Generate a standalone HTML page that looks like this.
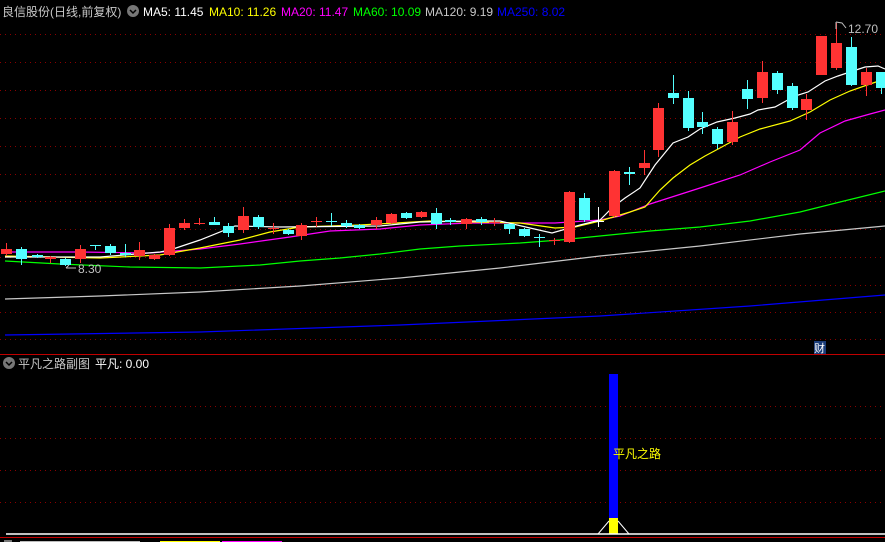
<!DOCTYPE html>
<html><head><meta charset="utf-8"><style>
html,body{margin:0;padding:0;background:#000;width:885px;height:542px;overflow:hidden}
svg{display:block}
text{font-family:"Liberation Sans","Noto Sans CJK SC",sans-serif}
</style></head><body>
<svg width="885" height="542" viewBox="0 0 885 542" xmlns="http://www.w3.org/2000/svg">
<rect width="885" height="542" fill="#000"/>
<g stroke="#8a0000" stroke-width="1" stroke-dasharray="1,4">
<line x1="0" y1="34.5" x2="885" y2="34.5"/><line x1="0" y1="62.5" x2="885" y2="62.5"/>
<line x1="0" y1="90.5" x2="885" y2="90.5"/><line x1="0" y1="118.5" x2="885" y2="118.5"/>
<line x1="0" y1="146.5" x2="885" y2="146.5"/><line x1="0" y1="174.5" x2="885" y2="174.5"/>
<line x1="0" y1="201.5" x2="885" y2="201.5"/><line x1="0" y1="229.5" x2="885" y2="229.5"/>
<line x1="0" y1="257.5" x2="885" y2="257.5"/><line x1="0" y1="285.5" x2="885" y2="285.5"/>
<line x1="0" y1="312.5" x2="885" y2="312.5"/><line x1="0" y1="339.5" x2="885" y2="339.5"/>
<line x1="0" y1="406.5" x2="885" y2="406.5"/><line x1="0" y1="438.5" x2="885" y2="438.5"/>
<line x1="0" y1="470.5" x2="885" y2="470.5"/><line x1="0" y1="502.5" x2="885" y2="502.5"/>
</g>
<line x1="0" y1="354.5" x2="885" y2="354.5" stroke="#c00000"/>
<line x1="0" y1="537.5" x2="885" y2="537.5" stroke="#c00000"/>
<g fill="none" stroke-width="1.2">
<polyline stroke="#0000ff" points="5,335 200,332 400,325 600,316 750,306 885,295"/>
<polyline stroke="#c8c8c8" points="5,299 100,296 200,292 300,286 400,278 500,268 600,256 700,246 800,234 885,226"/>
<polyline stroke="#00ff00" points="5,261 60,264 130,267 200,268 260,265 300,261 340,258 380,254 420,249 460,246 520,243 560,240 600,236 650,231 700,227 750,221 800,212 840,202 885,191"/>
<polyline stroke="#ff00ff" points="5,252 80,252 150,253 200,249 240,244 290,237 330,231 380,229 420,225 470,223 520,223 555,223 600,220 620,216 650,204 700,188 740,175 770,162 800,150 820,133 845,121 870,114 885,110"/>
<polyline stroke="#ffff00" points="5,256 100,258 160,255 200,248 240,240 270,232 300,227 360,225 430,221 520,223 555,228 575,227 600,221 630,212 645,207 660,190 673,178 690,165 705,156 720,148 740,137 760,129 790,121 810,112 830,100 850,91 870,84 885,79"/>
<polyline stroke="#ffffff" points="5,257 100,257 160,252 170,250 200,240 235,226 280,227 380,226 420,222 470,221 500,221 530,228 552,233 580,225 600,220 613,207 625,198 640,188 655,165 673,143 688,137 700,129 717,122 735,118 750,114 758,110 775,107 795,96 808,92 825,81 838,76 850,72 865,67 878,66 885,69"/>
</g>
<g id="c"></g>
<text x="848" y="33" font-size="12" fill="#c0c0c0">12.70</text>
<path d="M836 22 L836 29 M836 22 L842 23 L846 28" stroke="#c0c0c0" fill="none"/>
<text x="78" y="273" font-size="12" fill="#c0c0c0">8.30</text>
<path d="M66 268 L76 268 M66 268 L69 265" stroke="#c0c0c0" fill="none"/>
<rect x="814" y="341" width="12" height="13" fill="#1a3c78"/>
<text x="814" y="352" font-size="11" fill="#fff">财</text>
<text x="2" y="16" font-size="12" fill="#c8c8c8">良信股份(日线,前复权)</text>
<circle cx="133" cy="11" r="6" fill="#777"/><path d="M130 10 L133 13 L136 10" stroke="#000" stroke-width="1.5" fill="none"/>
<text x="143" y="16" font-size="12" fill="#fff">MA5: 11.45</text>
<text x="209" y="16" font-size="12" fill="#ffff00">MA10: 11.26</text>
<text x="281" y="16" font-size="12" fill="#ff00ff">MA20: 11.47</text>
<text x="353" y="16" font-size="12" fill="#00ff00">MA60: 10.09</text>
<text x="425" y="16" font-size="12" fill="#c8c8c8">MA120: 9.19</text>
<text x="497" y="16" font-size="12" fill="#0000ff">MA250: 8.02</text>
<circle cx="9" cy="363" r="6" fill="#777"/><path d="M6 362 L9 365 L12 362" stroke="#000" stroke-width="1.5" fill="none"/>
<text x="18" y="368" font-size="12" fill="#c8c8c8">平凡之路副图</text>
<text x="95" y="368" font-size="12" fill="#fff">平凡: 0.00</text>
<rect x="609" y="374" width="9" height="144" fill="#0000ff"/>
<rect x="609" y="518" width="9" height="16" fill="#ffff00"/>
<line x1="6" y1="534" x2="885" y2="534" stroke="#fff" stroke-width="1.5"/>
<path d="M598 534 L609 521 M618 521 L629 534" stroke="#fff" fill="none"/>
<text x="613" y="458" font-size="12" fill="#ffff00">平凡之路</text>
<g>
<rect x="4" y="540" width="8" height="2" fill="#777"/>
<rect x="20" y="541" width="120" height="1" fill="#bbb"/>
<rect x="160" y="541" width="60" height="1" fill="#ffff00"/>
<rect x="222" y="541" width="60" height="1" fill="#ff00ff"/>
</g>
</svg>
<script>
var d=[[6,'r',249,254,243,256],[21,'c',249,259,247,265],[37,'c',255,257,254,258],[50,'r',257,259,256,263],[65,'c',259,265,258,266],[80,'r',249,259,245,263],[95,'c',245,246,245,250],[110,'c',246,253,244,255],[125,'c',253,255,244,257],[139,'r',250,256,242,260],[154,'r',255,259,254,260],[169,'r',228,255,224,256],[184,'r',223,228,219,230],[199,'r',223,224,218,225],[214,'c',222,225,217,225],[228,'c',226,233,223,237],[243,'r',216,230,207,233],[258,'c',217,227,215,229],[273,'r',228,229,223,234],[288,'c',230,234,229,235],[301,'r',225,236,223,240],[316,'r',221,222,217,227],[331,'c',221,222,213,226],[346,'c',223,226,220,228],[359,'c',225,228,224,229],[376,'r',220,225,217,229],[391,'r',214,223,213,224],[406,'c',213,218,212,219],[421,'r',212,217,211,218],[436,'c',213,224,208,229],[450,'c',220,222,218,225],[466,'r',219,224,218,229],[481,'c',219,222,217,225],[494,'r',222,223,218,226],[509,'c',224,229,224,234],[524,'c',229,236,228,237],[539,'c',237,238,234,247],[554,'r',240,241,238,245],[569,'r',192,242,191,243],[584,'c',198,220,193,222],[598,'w',221,222,207,227],[614,'r',171,216,170,217],[629,'c',172,174,167,185],[644,'r',163,168,150,175],[658,'r',108,150,103,157],[673,'c',93,98,75,104],[688,'c',98,128,91,131],[702,'c',122,127,112,134],[717,'c',129,144,127,149],[732,'r',122,142,111,145],[747,'c',89,99,80,109],[762,'r',72,98,61,103],[777,'c',73,90,71,94],[792,'c',86,108,83,110],[806,'r',99,110,94,120],[821,'r',36,75,36,75],[836,'r',43,68,23,70],[851,'c',47,85,37,86],[866,'r',72,85,68,96],[881,'c',72,88,72,94]];
var g=document.getElementById('c'),s='';
d.forEach(function(a){var col=a[1]=='r'?'#ff3333':a[1]=='c'?'#54ffff':'#ffffff';var x=a[0];
s+='<line x1="'+(x+0.5)+'" y1="'+a[4]+'" x2="'+(x+0.5)+'" y2="'+a[5]+'" stroke="'+col+'"/>';
s+='<rect x="'+(x-5)+'" y="'+a[2]+'" width="11" height="'+Math.max(1,a[3]-a[2])+'" fill="'+col+'"/>';});
g.innerHTML=s;
</script>
</body></html>
